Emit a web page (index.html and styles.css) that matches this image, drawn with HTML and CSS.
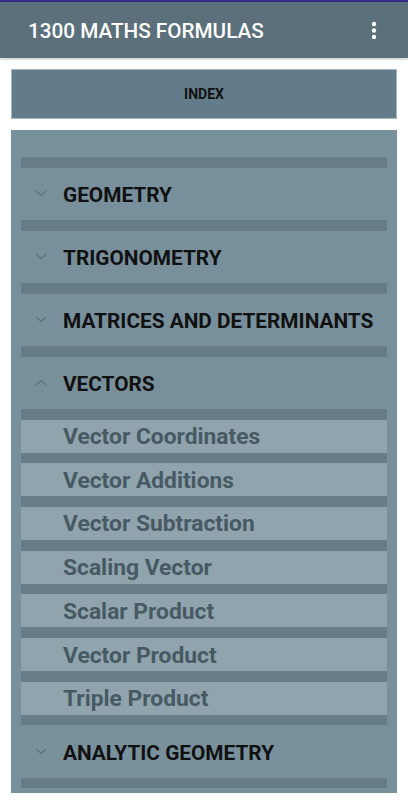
FILE: index.html
```html
<!DOCTYPE html>
<html>
<head>
<meta charset="utf-8">
<link rel="stylesheet" href="styles.css">
</head>
<body>
<div class="status"></div>
<header class="appbar">
  <span class="title">1300 MATHS FORMULAS</span>
  <svg class="kebab" width="6" height="20" viewBox="0 0 6 20"><circle cx="3" cy="3" r="2.2" fill="#fff"/><circle cx="3" cy="9.5" r="2.2" fill="#fff"/><circle cx="3" cy="16" r="2.2" fill="#fff"/></svg>
</header>
<div class="index">INDEX</div>
<div class="panel">
  <div class="bar"></div>
  <div class="head"><svg class="chev" width="12" height="7" viewBox="0 0 12 7"><path d="M1 1 L6 5.5 L11 1" fill="none" stroke="#5c727d" stroke-width="1.2"/></svg><span>GEOMETRY</span></div>
  <div class="bar"></div>
  <div class="head"><svg class="chev" width="12" height="7" viewBox="0 0 12 7"><path d="M1 1 L6 5.5 L11 1" fill="none" stroke="#5c727d" stroke-width="1.2"/></svg><span>TRIGONOMETRY</span></div>
  <div class="bar"></div>
  <div class="head"><svg class="chev" width="12" height="7" viewBox="0 0 12 7"><path d="M1 1 L6 5.5 L11 1" fill="none" stroke="#5c727d" stroke-width="1.2"/></svg><span>MATRICES AND DETERMINANTS</span></div>
  <div class="bar"></div>
  <div class="head"><svg class="chev" width="12" height="7" viewBox="0 0 12 7"><path d="M1 6 L6 1.5 L11 6" fill="none" stroke="#5c727d" stroke-width="1.2"/></svg><span>VECTORS</span></div>
  <div class="bar"></div>
  <div class="child">Vector Coordinates</div>
  <div class="bar"></div>
  <div class="child">Vector Additions</div>
  <div class="bar"></div>
  <div class="child">Vector Subtraction</div>
  <div class="bar"></div>
  <div class="child">Scaling Vector</div>
  <div class="bar"></div>
  <div class="child">Scalar Product</div>
  <div class="bar"></div>
  <div class="child">Vector Product</div>
  <div class="bar"></div>
  <div class="child">Triple Product</div>
  <div class="bar"></div>
  <div class="head"><svg class="chev" width="12" height="7" viewBox="0 0 12 7"><path d="M1 1 L6 5.5 L11 1" fill="none" stroke="#5c727d" stroke-width="1.2"/></svg><span>ANALYTIC GEOMETRY</span></div>
  <div class="bar"></div>
</div>
</body>
</html>
```
FILE: styles.css
```css
html, body {
  margin: 0;
  padding: 0;
  background: #ffffff;
  font-family: Roboto, "Liberation Sans", sans-serif;
}
.status {
  height: 2px;
  background: #3a2a8c;
}
.appbar {
  height: 56px;
  background: #5b707b;
  display: flex;
  align-items: center;
  justify-content: space-between;
  padding: 0 31px 0 28px;
  box-shadow: 0 1px 3px rgba(0, 0, 0, 0.25);
  position: relative;
}
.title {
  color: #ffffff;
  font-size: 20.7px;
  font-weight: 500;
  padding-top: 2px;
}
.kebab {
  display: block;
  margin-top: 1px;
}
.index {
  margin: 11px 11px 0;
  height: 48px;
  background: #627d89;
  border: 1px solid #a8b7be;
  display: flex;
  align-items: center;
  justify-content: center;
  font-size: 14px;
  font-weight: 700;
  color: #111111;
}
.panel {
  margin: 11px 11px 0;
  height: 636px;
  background: #78909c;
  padding: 27px 10px 0;
}
.bar {
  height: 10.5px;
  background: #667c87;
}
.head {
  height: 52.5px;
  display: flex;
  align-items: center;
  font-size: 20.8px;
  font-weight: 700;
  color: #111111;
}
.head span {
  padding-top: 3px;
}
.chev {
  display: block;
  margin: 0 16px 0 14px;
}
.child {
  height: 33.2px;
  background: #90a4ae;
  display: flex;
  align-items: center;
  padding: 1px 0 0 42px;
  box-sizing: border-box;
  font-size: 22.8px;
  font-weight: 700;
  color: #475a63;
}
```
